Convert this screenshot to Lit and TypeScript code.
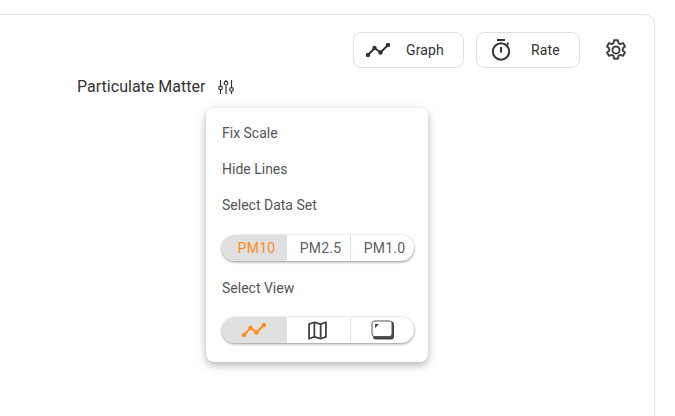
import { LitElement, html, css } from "lit";
import { customElement } from "lit/decorators.js";

const lineIcon = (w: number, h: number) => html`<svg width=${w} height=${h} viewBox="0 0 24 14" fill="none" stroke="currentColor">
  <path d="M2 12 L8.500 5 L14.500 9.500 L22 2" stroke-width="2"/>
  <g fill="currentColor" stroke="none"><circle cx="2" cy="12" r="2.200"/><circle cx="8.500" cy="5" r="2.200"/><circle cx="14.500" cy="9.500" r="2.200"/><circle cx="22" cy="2" r="2.200"/></g>
</svg>`;

const timerIcon = html`<svg width="20" height="24" viewBox="0 0 20 24" fill="none" stroke="currentColor" stroke-width="2">
  <path d="M6 2h8" /><circle cx="10" cy="13.500" r="8.200"/><path d="M10 9v5.500"/><path d="M16 6.500l1.500-1.500" />
</svg>`;

const gearIcon = html`<svg width="26" height="26" viewBox="0 0 24 24" fill="none" stroke="currentColor" stroke-width="1.800" stroke-linejoin="round">
  <path d="M10.200 3h3.600l.5 2.600 1.700.9 2.500-.9 1.800 3.100-2 1.700v2.200l2 1.700-1.800 3.100-2.500-.9-1.700.9-.5 2.600h-3.600l-.5-2.600-1.700-.9-2.500.9-1.800-3.100 2-1.700v-2.200l-2-1.700 1.800-3.100 2.500.9 1.700-.9z"/>
  <circle cx="12" cy="12" r="3.300"/>
</svg>`;

const tuneIcon = html`<svg width="16" height="16" viewBox="0 0 16 16" fill="none" stroke="currentColor" stroke-width="1.200">
  <path d="M2.500 1v6M2.500 11v4M8 1v1M8 6.500V15M13.500 1v7.500M13.500 12.500V15"/>
  <circle cx="2.500" cy="9" r="1.800"/><circle cx="8" cy="4.200" r="1.800"/><circle cx="13.500" cy="10.500" r="1.800"/>
</svg>`;

const mapIcon = html`<svg width="19" height="19" viewBox="0 0 18 18" fill="none" stroke="currentColor" stroke-width="1.700" stroke-linejoin="round">
  <path d="M1 3 L6 1.200 L12 3 L17 1.200 V15 L12 16.800 L6 15 L1 16.800 Z"/><path d="M6 1.200V15M12 3V16.800"/>
</svg>`;

const panelIcon = html`<svg width="24" height="20" viewBox="0 0 24 20" fill="none">
  <rect x="2" y="1.500" width="21" height="18" rx="3" fill="#444"/>
  <rect x="1" y="1" width="20" height="15.500" rx="2.500" fill="#fff" stroke="#555" stroke-width="1"/>
  <path d="M4 4h4L4 8z" fill="#444"/>
</svg>`;

@customElement("app-root")
export class AppRoot extends LitElement {
  static styles = css`
    :host {
      display: block;
      width: 675px;
      height: 416px;
      overflow: hidden;
      background: #fff;
      font-family: Roboto, "Liberation Sans", sans-serif;
      color: #424242;
    }
    .card {
      position: relative;
      box-sizing: border-box;
      width: 665px;
      height: 500px;
      margin: 14px 0 0 -10px;
      border: 1px solid #e0e0e0;
      border-radius: 10px;
    }
    .toolbar {
      display: flex;
      justify-content: flex-end;
      align-items: center;
      gap: 12px;
      padding: 17px 26px 0 0;
    }
    .tool {
      box-sizing: border-box;
      display: flex;
      align-items: center;
      height: 36px;
      border: 1px solid #e0e0e0;
      border-radius: 8px;
      background: #fff;
      font-size: 14px;
      font-weight: 400;
      letter-spacing: 0.15px;
      color: #333;
    }
    .graph { width: 111px; padding-left: 12px; gap: 16px; }
    .rate { width: 104px; padding-left: 14px; gap: 20px; }
    .settings { display: flex; margin-left: 11px; margin-right: -1px; color: #424242; }
    .title-row {
      display: flex;
      align-items: center;
      gap: 12px;
      padding: 9px 0 0 86px;
      font-size: 16px;
      font-weight: 400;
      letter-spacing: 0.02px;
      line-height: 20px;
      color: #333;
    }
    .title-row svg { display: block; }
    .menu {
      position: absolute;
      left: 215px;
      top: 93px;
      box-sizing: border-box;
      width: 222px;
      height: 254px;
      padding: 7px 14px 0 16px;
      background: #fff;
      border-radius: 8px;
      box-shadow: 0 3px 6px rgba(0,0,0,0.2), 0 3px 14px rgba(0,0,0,0.12);
      font-size: 14px;
      color: #555;
    }
    .item { height: 36px; line-height: 36px; }
    .seg {
      display: grid;
      grid-template-columns: 64px 64px 1fr;
      height: 26px;
      margin: 12px 0 9px;
      border-radius: 13px;
      overflow: hidden;
      background: #fff;
      box-shadow: 0 1px 3px rgba(0,0,0,0.45);
    }
    .seg.view { margin-top: 11px; }
    .seg > div {
      display: flex;
      align-items: center;
      justify-content: center;
      border-left: 1px solid #e0e0e0;
      color: #616161;
      font-size: 14px;
      letter-spacing: 0.25px;
      padding-left: 4px;
    }
    .seg > div:first-child { border-left: 0; padding-left: 5px; }
    .seg.view > div { color: #424242; padding-left: 0; }
    .seg.view > div:nth-child(2) { padding-right: 2px; }
    .seg > div.on { background: #e0e0e0; color: #ff8c1a; }
    .seg.view > div.on { color: #ff8c1a; padding-left: 0; }
  `;

  render() {
    return html`<div class="card">
      <div class="toolbar">
        <div class="tool graph">${lineIcon(24, 14)}<span>Graph</span></div>
        <div class="tool rate">${timerIcon}<span>Rate</span></div>
        <div class="settings">${gearIcon}</div>
      </div>
      <div class="title-row"><span>Particulate Matter</span>${tuneIcon}</div>
      <div class="menu">
        <div class="item">Fix Scale</div>
        <div class="item">Hide Lines</div>
        <div class="item">Select Data Set</div>
        <div class="seg"><div class="on">PM10</div><div>PM2.5</div><div>PM1.0</div></div>
        <div class="item">Select View</div>
        <div class="seg view"><div class="on">${lineIcon(24, 14)}</div><div>${mapIcon}</div><div>${panelIcon}</div></div>
      </div>
    </div>`;
  }
}
